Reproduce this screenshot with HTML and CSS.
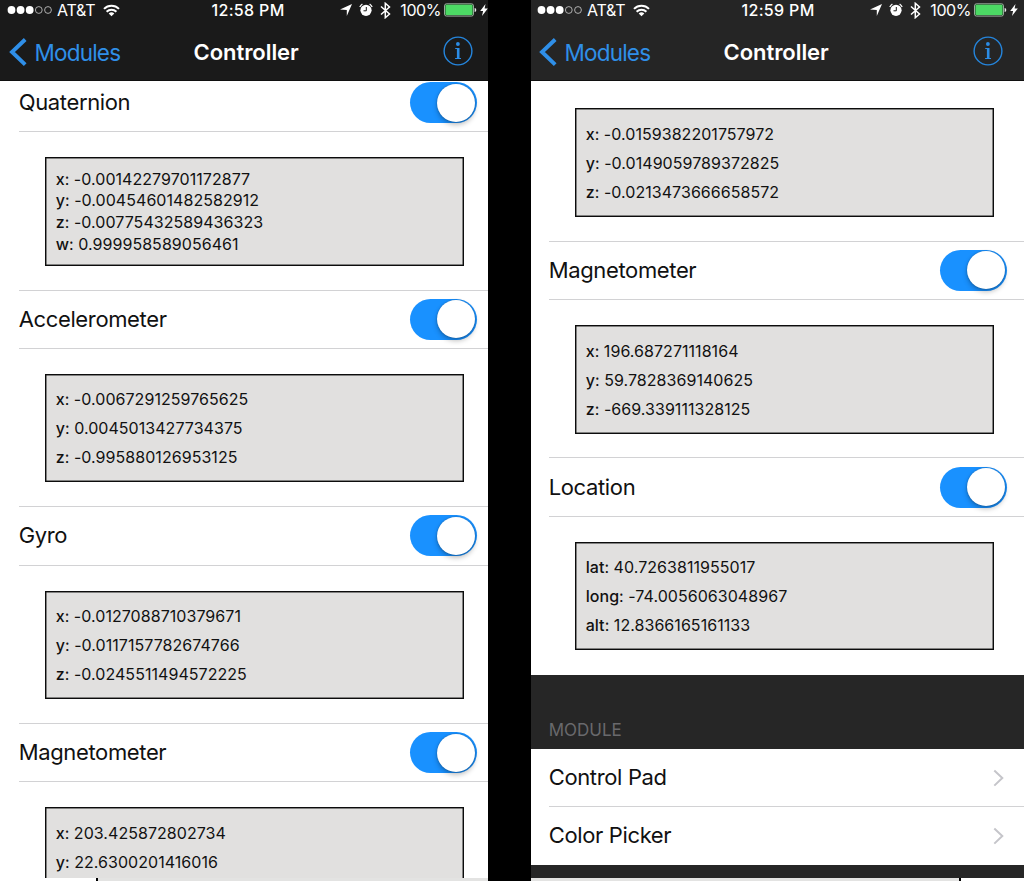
FILE: index.html
```html
<!DOCTYPE html>
<html lang="en">
<head>
<meta charset="utf-8">
<title>Controller</title>
<link rel="stylesheet" href="styles.css">
</head>
<body>
<svg class="defs" aria-hidden="true">
  <symbol id="signal" viewBox="0 0 46 10"><g fill="#fff"><circle cx="4.5" cy="5" r="3.9"/><circle cx="13.6" cy="5" r="3.9"/><circle cx="22.7" cy="5" r="3.9"/></g><g fill="none" stroke="#d0d0d0" stroke-width=".8"><circle cx="31.8" cy="5" r="3.4"/><circle cx="41" cy="5" r="3.4"/></g></symbol>
  <symbol id="wifi" viewBox="0 0 17 13"><g fill="none" stroke="#fff" stroke-width="2"><path d="M1 4.9a10.6 10.6 0 0 1 15 0"/><path d="M3.6 7.7a6.9 6.9 0 0 1 9.8 0"/></g><path d="M8.5 12.3 5.7 9.5a4 4 0 0 1 5.6 0z" fill="#fff"/></symbol>
  <symbol id="arrow" viewBox="0 0 12 12"><path d="M12 0 6.8 12V6L0 5.6z" fill="#fff"/></symbol>
  <symbol id="alarm" viewBox="0 0 14 14"><circle cx="7" cy="7.3" r="5.6" fill="#fff"/><path d="M7.3 4v3.8H4.5" fill="none" stroke="#1b1b1b" stroke-width="1"/><path d="M.8 4A8 8 0 0 1 3.4 1M13.2 4A8 8 0 0 0 10.6 1" fill="none" stroke="#fff" stroke-width="1.2"/></symbol>
  <symbol id="bluetooth" viewBox="0 0 11 17"><path d="M1 4.5 9.5 12 5.3 15.7V1.3L9.5 5 1 12.5" fill="none" stroke="#fff" stroke-width="1.5"/></symbol>
  <symbol id="battery" viewBox="0 0 33 14"><rect x=".5" y=".8" width="29" height="12.3" rx="2" fill="#1c3d22" stroke="#b9c9bb" stroke-width=".8"/><rect x="1.5" y="1.8" width="27" height="10.3" rx="1" fill="#4cd964"/><path d="M30.6 5q1.7.2 1.7 2t-1.7 2z" fill="#e8e8e8"/></symbol>
  <symbol id="bolt" viewBox="0 0 8 12"><path d="M5.5 0 .2 7h2.9L2 12l5.8-7.4H4.6z" fill="#fff"/></symbol>
  <symbol id="back" viewBox="0 0 18 30"><path d="M16.2 2.5 3 15l13.2 12.7" fill="none" stroke="#2f8fe8" stroke-width="3.9"/></symbol>
  <symbol id="info" viewBox="0 0 30 30"><circle cx="15" cy="15" r="13.9" fill="none" stroke="#2585dc" stroke-width="1.4"/><circle cx="14.9" cy="8" r="1.9" fill="#2b8ce5"/><path d="M12.2 12.1h4.3v10h1.5v1h-5.9v-1h1.8v-9h-1.7z" fill="#2b8ce5"/></symbol>
  <symbol id="chevron" viewBox="0 0 11 18"><path d="m1.3 1.4 8 7.6-8 7.6" fill="none" stroke="#c5c5ca" stroke-width="2"/></symbol>
</svg>
<main class="screens">
  <section class="phone phone-first">
    <header class="top">
      <div class="status">
        <svg class="signal"><use href="#signal"/></svg><span class="carrier">AT&amp;T</span><svg class="wifi"><use href="#wifi"/></svg>
        <span class="time">12:58 PM</span>
        <svg class="arrow"><use href="#arrow"/></svg><svg class="alarm"><use href="#alarm"/></svg><svg class="bluetooth"><use href="#bluetooth"/></svg><span class="percent">100%</span><svg class="battery"><use href="#battery"/></svg><svg class="bolt"><use href="#bolt"/></svg>
      </div>
      <nav class="nav"><svg class="back"><use href="#back"/></svg><span class="back-label">Modules</span><h1 class="title">Controller</h1><svg class="info"><use href="#info"/></svg></nav>
    </header>
    <div class="list">
      <div class="row"><span class="label">Quaternion</span><span class="switch"></span></div>
      <div class="panel"><div class="readout four"><p><b>x</b>: -0.00142279701172877</p><p><b>y</b>: -0.00454601482582912</p><p><b>z</b>: -0.00775432589436323</p><p><b>w</b>: 0.999958589056461</p></div></div>
      <div class="row"><span class="label">Accelerometer</span><span class="switch"></span></div>
      <div class="panel"><div class="readout"><p><b>x</b>: -0.0067291259765625</p><p><b>y</b>: 0.0045013427734375</p><p><b>z</b>: -0.995880126953125</p></div></div>
      <div class="row"><span class="label">Gyro</span><span class="switch"></span></div>
      <div class="panel"><div class="readout"><p><b>x</b>: -0.0127088710379671</p><p><b>y</b>: -0.0117157782674766</p><p><b>z</b>: -0.0245511494572225</p></div></div>
      <div class="row"><span class="label">Magnetometer</span><span class="switch"></span></div>
      <div class="panel"><div class="readout"><p><b>x</b>: 203.425872802734</p><p><b>y</b>: 22.6300201416016</p></div></div>
    </div>
    <div class="edge"><i class="edge-white"></i><i class="edge-mark"></i><i class="edge-gray"></i></div>
  </section>
  <section class="phone phone-second">
    <header class="top">
      <div class="status">
        <svg class="signal"><use href="#signal"/></svg><span class="carrier">AT&amp;T</span><svg class="wifi"><use href="#wifi"/></svg>
        <span class="time">12:59 PM</span>
        <svg class="arrow"><use href="#arrow"/></svg><svg class="alarm"><use href="#alarm"/></svg><svg class="bluetooth"><use href="#bluetooth"/></svg><span class="percent">100%</span><svg class="battery"><use href="#battery"/></svg><svg class="bolt"><use href="#bolt"/></svg>
      </div>
      <nav class="nav"><svg class="back"><use href="#back"/></svg><span class="back-label">Modules</span><h1 class="title">Controller</h1><svg class="info"><use href="#info"/></svg></nav>
    </header>
    <div class="list">
      <div class="panel"><div class="readout"><p><b>x</b>: -0.0159382201757972</p><p><b>y</b>: -0.0149059789372825</p><p><b>z</b>: -0.0213473666658572</p></div></div>
      <div class="row"><span class="label">Magnetometer</span><span class="switch"></span></div>
      <div class="panel"><div class="readout"><p><b>x</b>: 196.687271118164</p><p><b>y</b>: 59.7828369140625</p><p><b>z</b>: -669.339111328125</p></div></div>
      <div class="row"><span class="label">Location</span><span class="switch"></span></div>
      <div class="panel last"><div class="readout"><p><b>lat</b>: 40.7263811955017</p><p><b>long</b>: -74.0056063048967</p><p><b>alt</b>: 12.8366165161133</p></div></div>
      <h2 class="section">MODULE</h2>
      <div class="row link"><span class="label">Control Pad</span><svg class="chevron"><use href="#chevron"/></svg></div>
      <div class="row link last"><span class="label">Color Picker</span><svg class="chevron"><use href="#chevron"/></svg></div>
      <div class="footer"></div>
    </div>
    <div class="edge"><i class="edge-gray"></i><i class="edge-mark"></i><i class="edge-white"></i></div>
  </section>
</main>
</body>
</html>
```
FILE: styles.css
```css
* { box-sizing: border-box; }
body { margin: 0; background: #000; font-family: Inter, "Liberation Sans", sans-serif; color: #111; }
.defs { position: absolute; width: 0; height: 0; }
.screens { display: grid; grid-template-columns: 488px 493px; column-gap: 43px; height: 881px; overflow: hidden; }
.phone { display: grid; grid-template-rows: 81px minmax(0, 1fr) 3px; height: 881px; overflow: hidden; background: #fff; --bar: #1a1a1a; --shift: 0px; }
.phone-second { --bar: #252525; --shift: -1px; }
.top { background: var(--bar); color: #fff; border-bottom: 1px solid #101010; overflow: hidden; }
.status, .nav { display: flex; align-items: center; margin-left: var(--shift); white-space: nowrap; }
.status { height: 20px; font-size: 16px; width: 489px; }
.status > *, .nav > * { flex: none; }
.signal { width: 46px; height: 10px; margin-left: 6.5px; }
.carrier { width: 40px; margin-left: 4.5px; letter-spacing: -.2px; }
.wifi { width: 17px; height: 13px; margin-left: 6px; }
.time { width: 76px; margin-left: 91.5px; font-weight: 500; letter-spacing: .33px; }
.arrow { width: 12px; height: 12px; margin-left: 52.5px; }
.alarm { width: 14px; height: 14px; margin-left: 7.3px; }
.bluetooth { width: 11px; height: 17px; margin-left: 7px; }
.percent { width: 42px; margin-left: 9px; letter-spacing: -.4px; }
.battery { width: 33px; height: 14px; margin-left: 1.7px; }
.bolt { width: 8px; height: 12px; margin-left: 3px; }
.nav { height: 61px; padding-top: 3px; }
.back { width: 18px; height: 30px; margin-left: 9px; }
.back-label { width: 90px; margin-left: 7.5px; font-size: 22.5px; letter-spacing: -.8px; color: #2f8fe8; }
.title { margin: 0 0 0 69px; width: 110px; font-size: 22px; letter-spacing: -.05px; font-weight: 600; }
.info { width: 30px; height: 30px; margin-left: 139.5px; margin-top: -2px; }
.list { overflow: hidden; padding-top: 2.4px; }
.phone-first .list { padding-top: 0; }
.phone-first .list > .row:first-child { margin-top: -7.1px; }
.row { display: flex; align-items: center; height: 58.3px; margin-left: calc(18.7px + var(--shift)); border-bottom: 1px solid #d2d2d4; }
.label { font-size: 22px; letter-spacing: -.36px; width: 391px; white-space: nowrap; padding-bottom: 1px; }
.switch { width: 67.3px; height: 41px; border-radius: 21px; background: #1991ff; padding: 1.5px; display: flex; justify-content: flex-end; }
.switch::after { content: ""; width: 38px; height: 38px; border-radius: 50%; background: #fff; box-shadow: 0 3px 5px rgba(0,0,0,.25), 0 0 2px rgba(0,0,0,.3); }
.panel { height: 158.37px; margin-left: calc(18.7px + var(--shift)); padding: 25px 0 0 26.3px; border-bottom: 1px solid #d2d2d4; }
.panel.last, .row.last { border-bottom-color: transparent; }
.readout { width: 419px; height: 108.5px; border: 1px solid #0c0c0c; background: #e1e0df; box-shadow: inset 0 0 0 .5px #222; padding: 10.5px 9.7px; font-size: 16px; letter-spacing: .05px; line-height: 29.05px; white-space: nowrap; }
.readout.four { line-height: 21.75px; }
.readout p { margin: 0; }
.readout b { font-weight: 500; }
.section { margin: 0; height: 74px; background: #262626; color: #69696c; font-size: 17px; font-weight: 400; line-height: 22px; padding: 44px 0 0 17.7px; }
.link { height: 58px; }
.link .label { width: 444.5px; }
.chevron { width: 11px; height: 18px; }
.footer { height: 20px; background: #262626; }
.edge { display: flex; background: #fff; z-index: 1; }
.edge-mark { width: 2px; background: #000; }
.edge-gray { background: #e3e3e2; }
.phone-first .edge-white { width: 96px; }
.phone-first .edge-gray { flex: 1; }
.phone-second .edge-gray { width: 428px; }
.phone-second .edge-white { flex: 1; }
```
